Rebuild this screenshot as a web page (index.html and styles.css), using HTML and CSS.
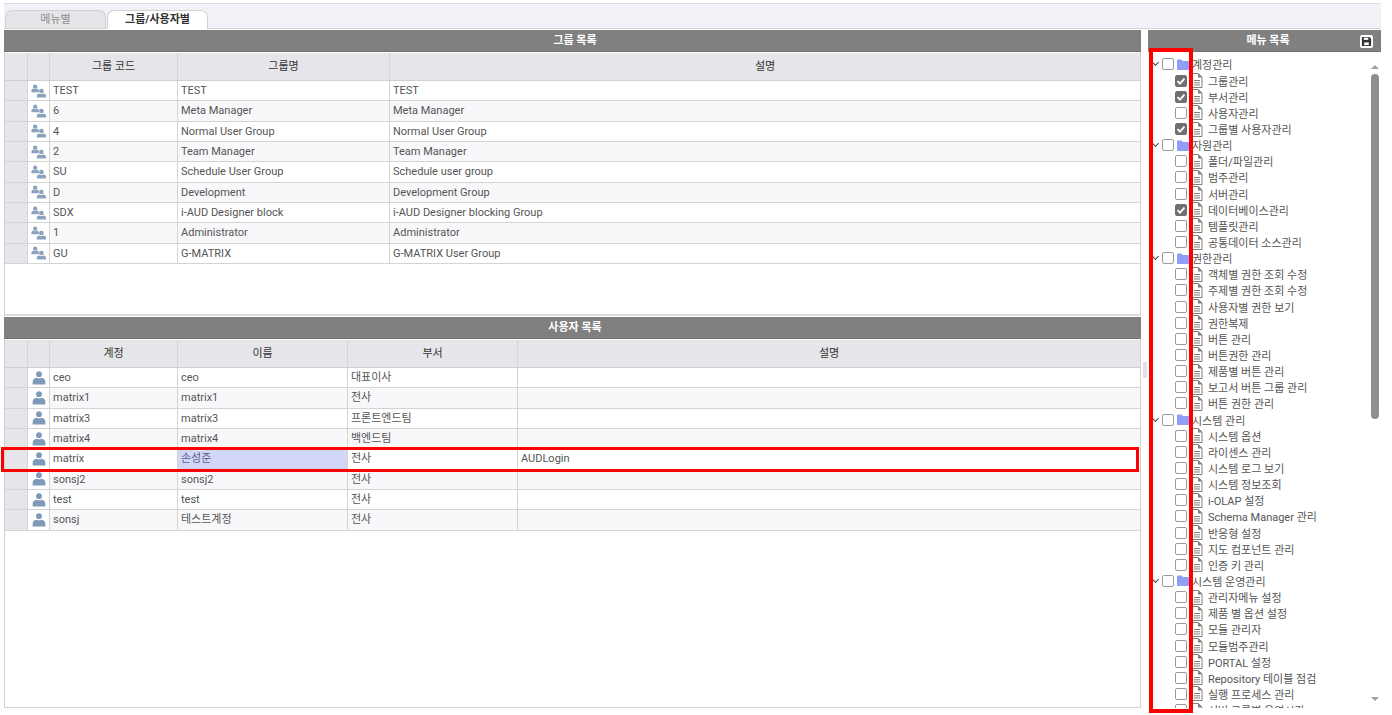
FILE: index.html
```html
<!DOCTYPE html>
<html lang="en">
<head>
  <meta charset="UTF-8" />
  <title>권한 관리</title>
  <link rel="stylesheet" href="styles.css">
</head>
<body>
  <svg class="defs" width="0" height="0">
    <symbol id="i-user" viewBox="0 0 16 16">
      <circle cx="8" cy="3.600" r="3.300" />
      <path d="M.8 15.500v-3.800C.8 9 3.500 7.600 5.300 7.600 6.300 8.500 9.700 8.500 10.700 7.600 12.500 7.600 15.200 9 15.200 11.700v3.800z" />
    </symbol>
    <symbol id="i-group" viewBox="0 0 18 16">
      <circle cx="5" cy="2.800" r="2.600" />
      <path d="M.5 9.500V7.800C.5 6 2 5.400 3 5.400 4 6.100 6 6.100 7 5.400 8 5.400 9.500 6 9.500 7.500V9.500z" />
      <circle cx="12.500" cy="8" r="2.800" />
      <path d="M7 15.800V13.800C7 11.800 8.800 10.900 10.200 10.900 11.300 11.700 13.700 11.700 14.800 10.900 16.200 10.900 18 11.800 18 13.800V15.800z" />
    </symbol>
    <symbol id="i-doc" viewBox="0 0 12 15">
      <path class="doc-line" d="M1 .5h6.500L11 4v10.500H1z" />
      <path class="doc-fold" d="M7 .5V4.500h4z" />
      <path class="doc-line" d="M3 7.500h6M3 9.800h6M3 12h6" />
    </symbol>
    <symbol id="i-folder" viewBox="0 0 12 11">
      <path d="M0 1.500C0 .8.500.500 1 .500h3.500L6 2h5c.600 0 1 .400 1 1v7c0 .600-.400 1-1 1H1c-.500 0-1-.400-1-1z" />
    </symbol>
    <symbol id="i-check" viewBox="0 0 12 12">
      <path d="M2.500 6.200l2.500 2.500 4.500-5" />
    </symbol>
  </svg>

  <div class="page">
    <div class="tab-strip">
      <div class="tab">메뉴별</div>
      <div class="tab active">그룹/사용자별</div>
    </div>

    <div class="workspace">
      <div class="left-col">
        <section class="panel group-panel">
          <div class="panel-title">그룹 목록</div>
          <div class="row head cols-group">
            <div></div><div></div><div>그룹 코드</div><div>그룹명</div><div>설명</div>
          </div>
          <div class="row cols-group"><div class="num"></div><div class="ico"><svg class="group-ico"><use href="#i-group"/></svg></div><div>TEST</div><div>TEST</div><div>TEST</div></div>
          <div class="row cols-group"><div class="num"></div><div class="ico"><svg class="group-ico"><use href="#i-group"/></svg></div><div>6</div><div>Meta Manager</div><div>Meta Manager</div></div>
          <div class="row cols-group"><div class="num"></div><div class="ico"><svg class="group-ico"><use href="#i-group"/></svg></div><div>4</div><div>Normal User Group</div><div>Normal User Group</div></div>
          <div class="row cols-group"><div class="num"></div><div class="ico"><svg class="group-ico"><use href="#i-group"/></svg></div><div>2</div><div>Team Manager</div><div>Team Manager</div></div>
          <div class="row cols-group"><div class="num"></div><div class="ico"><svg class="group-ico"><use href="#i-group"/></svg></div><div>SU</div><div>Schedule User Group</div><div>Schedule user group</div></div>
          <div class="row cols-group"><div class="num"></div><div class="ico"><svg class="group-ico"><use href="#i-group"/></svg></div><div>D</div><div>Development</div><div>Development Group</div></div>
          <div class="row cols-group"><div class="num"></div><div class="ico"><svg class="group-ico"><use href="#i-group"/></svg></div><div>SDX</div><div>i-AUD Designer block</div><div>i-AUD Designer blocking Group</div></div>
          <div class="row cols-group"><div class="num"></div><div class="ico"><svg class="group-ico"><use href="#i-group"/></svg></div><div>1</div><div>Administrator</div><div>Administrator</div></div>
          <div class="row cols-group"><div class="num"></div><div class="ico"><svg class="group-ico"><use href="#i-group"/></svg></div><div>GU</div><div>G-MATRIX</div><div>G-MATRIX User Group</div></div>
        </section>

        <section class="panel user-panel">
          <div class="panel-title">사용자 목록</div>
          <div class="row head cols-user">
            <div></div><div></div><div>계정</div><div>이름</div><div>부서</div><div>설명</div>
          </div>
          <div class="row cols-user"><div class="num"></div><div class="ico"><svg class="user-ico"><use href="#i-user"/></svg></div><div>ceo</div><div>ceo</div><div>대표이사</div><div></div></div>
          <div class="row cols-user"><div class="num"></div><div class="ico"><svg class="user-ico"><use href="#i-user"/></svg></div><div>matrix1</div><div>matrix1</div><div>전사</div><div></div></div>
          <div class="row cols-user"><div class="num"></div><div class="ico"><svg class="user-ico"><use href="#i-user"/></svg></div><div>matrix3</div><div>matrix3</div><div>프론트엔드팀</div><div></div></div>
          <div class="row cols-user"><div class="num"></div><div class="ico"><svg class="user-ico"><use href="#i-user"/></svg></div><div>matrix4</div><div>matrix4</div><div>백엔드팀</div><div></div></div>
          <div class="row cols-user"><div class="num"></div><div class="ico"><svg class="user-ico"><use href="#i-user"/></svg></div><div>matrix</div><div class="picked">손성준</div><div>전사</div><div>AUDLogin</div></div>
          <div class="row cols-user"><div class="num"></div><div class="ico"><svg class="user-ico"><use href="#i-user"/></svg></div><div>sonsj2</div><div>sonsj2</div><div>전사</div><div></div></div>
          <div class="row cols-user"><div class="num"></div><div class="ico"><svg class="user-ico"><use href="#i-user"/></svg></div><div>test</div><div>test</div><div>전사</div><div></div></div>
          <div class="row cols-user"><div class="num"></div><div class="ico"><svg class="user-ico"><use href="#i-user"/></svg></div><div>sonsj</div><div>테스트계정</div><div>전사</div><div></div></div>
        </section>
      </div>

      <div class="splitter"><span class="grip"></span></div>

      <aside class="menu-panel">
        <div class="panel-title menu-title">메뉴 목록
          <button class="save-btn" type="button">
            <svg viewBox="0 0 12 12" width="11" height="11"><path d="M1 1h8l2 2v8H1z" fill="#333"/><rect x="3" y="1.800" width="5" height="2.400" fill="#fff"/><rect x="3.500" y="7" width="5" height="3" fill="#fff"/></svg>
          </button>
        </div>
        <div class="tree">
          <div class="tree-list">
            <div class="node folder"><span class="chev"></span><span class="cb"></span><svg class="folder-ico"><use href="#i-folder"/></svg><span>계정관리</span></div>
            <div class="node"><span class="cb on"><svg><use href="#i-check"/></svg></span><svg class="doc-ico"><use href="#i-doc"/></svg><span>그룹관리</span></div>
            <div class="node"><span class="cb on"><svg><use href="#i-check"/></svg></span><svg class="doc-ico"><use href="#i-doc"/></svg><span>부서관리</span></div>
            <div class="node"><span class="cb"></span><svg class="doc-ico"><use href="#i-doc"/></svg><span>사용자관리</span></div>
            <div class="node"><span class="cb on"><svg><use href="#i-check"/></svg></span><svg class="doc-ico"><use href="#i-doc"/></svg><span>그룹별 사용자관리</span></div>
            <div class="node folder"><span class="chev"></span><span class="cb"></span><svg class="folder-ico"><use href="#i-folder"/></svg><span>자원관리</span></div>
            <div class="node"><span class="cb"></span><svg class="doc-ico"><use href="#i-doc"/></svg><span>폴더/파일관리</span></div>
            <div class="node"><span class="cb"></span><svg class="doc-ico"><use href="#i-doc"/></svg><span>범주관리</span></div>
            <div class="node"><span class="cb"></span><svg class="doc-ico"><use href="#i-doc"/></svg><span>서버관리</span></div>
            <div class="node"><span class="cb on"><svg><use href="#i-check"/></svg></span><svg class="doc-ico"><use href="#i-doc"/></svg><span>데이터베이스관리</span></div>
            <div class="node"><span class="cb"></span><svg class="doc-ico"><use href="#i-doc"/></svg><span>템플릿관리</span></div>
            <div class="node"><span class="cb"></span><svg class="doc-ico"><use href="#i-doc"/></svg><span>공통데이터 소스관리</span></div>
            <div class="node folder"><span class="chev"></span><span class="cb"></span><svg class="folder-ico"><use href="#i-folder"/></svg><span>권한관리</span></div>
            <div class="node"><span class="cb"></span><svg class="doc-ico"><use href="#i-doc"/></svg><span>객체별 권한 조회 수정</span></div>
            <div class="node"><span class="cb"></span><svg class="doc-ico"><use href="#i-doc"/></svg><span>주제별 권한 조회 수정</span></div>
            <div class="node"><span class="cb"></span><svg class="doc-ico"><use href="#i-doc"/></svg><span>사용자별 권한 보기</span></div>
            <div class="node"><span class="cb"></span><svg class="doc-ico"><use href="#i-doc"/></svg><span>권한복제</span></div>
            <div class="node"><span class="cb"></span><svg class="doc-ico"><use href="#i-doc"/></svg><span>버튼 관리</span></div>
            <div class="node"><span class="cb"></span><svg class="doc-ico"><use href="#i-doc"/></svg><span>버튼권한 관리</span></div>
            <div class="node"><span class="cb"></span><svg class="doc-ico"><use href="#i-doc"/></svg><span>제품별 버튼 관리</span></div>
            <div class="node"><span class="cb"></span><svg class="doc-ico"><use href="#i-doc"/></svg><span>보고서 버튼 그룹 관리</span></div>
            <div class="node"><span class="cb"></span><svg class="doc-ico"><use href="#i-doc"/></svg><span>버튼 권한 관리</span></div>
            <div class="node folder"><span class="chev"></span><span class="cb"></span><svg class="folder-ico"><use href="#i-folder"/></svg><span>시스템 관리</span></div>
            <div class="node"><span class="cb"></span><svg class="doc-ico"><use href="#i-doc"/></svg><span>시스템 옵션</span></div>
            <div class="node"><span class="cb"></span><svg class="doc-ico"><use href="#i-doc"/></svg><span>라이센스 관리</span></div>
            <div class="node"><span class="cb"></span><svg class="doc-ico"><use href="#i-doc"/></svg><span>시스템 로그 보기</span></div>
            <div class="node"><span class="cb"></span><svg class="doc-ico"><use href="#i-doc"/></svg><span>시스템 정보조회</span></div>
            <div class="node"><span class="cb"></span><svg class="doc-ico"><use href="#i-doc"/></svg><span>i-OLAP 설정</span></div>
            <div class="node"><span class="cb"></span><svg class="doc-ico"><use href="#i-doc"/></svg><span>Schema Manager 관리</span></div>
            <div class="node"><span class="cb"></span><svg class="doc-ico"><use href="#i-doc"/></svg><span>반응형 설정</span></div>
            <div class="node"><span class="cb"></span><svg class="doc-ico"><use href="#i-doc"/></svg><span>지도 컴포넌트 관리</span></div>
            <div class="node"><span class="cb"></span><svg class="doc-ico"><use href="#i-doc"/></svg><span>인증 키 관리</span></div>
            <div class="node folder"><span class="chev"></span><span class="cb"></span><svg class="folder-ico"><use href="#i-folder"/></svg><span>시스템 운영관리</span></div>
            <div class="node"><span class="cb"></span><svg class="doc-ico"><use href="#i-doc"/></svg><span>관리자메뉴 설정</span></div>
            <div class="node"><span class="cb"></span><svg class="doc-ico"><use href="#i-doc"/></svg><span>제품 별 옵션 설정</span></div>
            <div class="node"><span class="cb"></span><svg class="doc-ico"><use href="#i-doc"/></svg><span>모듈 관리자</span></div>
            <div class="node"><span class="cb"></span><svg class="doc-ico"><use href="#i-doc"/></svg><span>모듈범주관리</span></div>
            <div class="node"><span class="cb"></span><svg class="doc-ico"><use href="#i-doc"/></svg><span>PORTAL 설정</span></div>
            <div class="node"><span class="cb"></span><svg class="doc-ico"><use href="#i-doc"/></svg><span>Repository 테이블 점검</span></div>
            <div class="node"><span class="cb"></span><svg class="doc-ico"><use href="#i-doc"/></svg><span>실행 프로세스 관리</span></div>
            <div class="node"><span class="cb"></span><svg class="doc-ico"><use href="#i-doc"/></svg><span>서버 그룹별 운영시간</span></div>
          </div>
          <div class="scrollbar">
            <span class="arrow up"></span>
            <span class="thumb"></span>
            <span class="arrow down"></span>
          </div>
        </div>
      </aside>
    </div>
  </div>

  <!-- red highlight boxes over the grid and the tree -->
  <div class="mark mark-row"></div>
  <div class="mark mark-tree"></div>
</body>
</html>
```

FILE: styles.css
```css
html, body {
  margin: 0;
  height: 100%;
  overflow: hidden;
  background: #fff;
}

body {
  font-family: Roboto, "Noto Sans CJK KR", sans-serif;
  font-size: 11px;
  color: #555;
}

.defs {
  position: absolute;
}

.page {
  width: 1377px;
  margin-left: 4px;
  padding-top: 3px;
}

/* === TABS === */
.tab-strip {
  display: flex;
  align-items: flex-end;
  gap: 1px;
  height: 24px;
  padding-left: 1px;
  background: #f1f1f7;
  border-top: 1px solid #dcdcdc;
  border-bottom: 1px solid #d2d2d2;
}

.tab {
  width: 101px;
  height: 18px;
  line-height: 18px;
  text-align: center;
  color: #8c8c8c;
  background: #e6e6ea;
  border: 1px solid #d2d2d2;
  border-bottom: 0;
  border-radius: 7px 7px 0 0;
  box-sizing: border-box;
}

.tab.active {
  height: 19px;
  margin-bottom: -1px;
  background: #fff;
  color: #333;
  font-weight: 700;
}

/* === LAYOUT === */
.workspace {
  display: flex;
  height: 678px;
  margin-top: 1px;
}

.left-col {
  width: 1137px;
  display: flex;
  flex-direction: column;
}

.panel {
  box-sizing: border-box;
  border-left: 1px solid #d0d0d0;
  border-right: 1px solid #d0d0d0;
  border-bottom: 1px solid #d0d0d0;
}

.group-panel {
  height: 286px;
  border-bottom-width: 2px;
  border-bottom-color: #dcdcdc;
}

.user-panel {
  flex: 1;
  margin-top: 1px;
}

.panel-title {
  height: 22px;
  line-height: 21px;
  margin: 0 -1px 1px;
  padding-left: 5px;
  box-sizing: border-box;
  text-align: center;
  font-weight: 700;
  color: #fff;
  background: #808080;
  border-bottom: 1px solid #707070;
}

.splitter {
  width: 7px;
  flex: none;
  padding-top: 332px;
  box-sizing: border-box;
}

.grip {
  display: block;
  width: 4px;
  height: 16px;
  margin: 0 auto;
  background: #e2e2e6;
}

/* === GRID ROWS === */
.row {
  display: grid;
  height: 20.330px;
  box-sizing: border-box;
  border-bottom: 1px solid #d4d4d4;
  line-height: 20px;
}

.row:nth-child(even) {
  background: #f8f8fb;
}

.row > div {
  padding-left: 3px;
  border-right: 1px solid #d4d4d4;
  overflow: hidden;
  white-space: nowrap;
}

.row > div:last-child {
  border-right: 0;
}

.cols-group {
  grid-template-columns: 23px 22px 128px 212px 1fr;
}

.cols-user {
  grid-template-columns: 23px 22px 128px 170px 170px 1fr;
}

.row.head {
  height: 28px;
  line-height: 27px;
  background: #e6e6ea;
  border-bottom-color: #d0d0d0;
  color: #333;
}

.row.head > div {
  padding-left: 0;
  text-align: center;
}

.row > .num {
  background: #e6e6ea;
  padding: 0;
}

.row > .ico {
  display: flex;
  align-items: center;
  justify-content: center;
  padding: 0;
  background: #fff;
}

.row > .picked {
  background: #d3d7f7;
  color: #5a5f8a;
}

.group-ico {
  width: 15px;
  height: 14px;
  fill: #8ba2bd;
}

.user-ico {
  width: 14px;
  height: 14px;
  fill: #7f9ab8;
}

/* === MENU TREE === */
.menu-panel {
  width: 233px;
  flex: none;
}

.menu-title {
  position: relative;
  margin: 0 0 1px;
  padding-left: 7px;
}

.save-btn {
  position: absolute;
  right: 8px;
  top: 5px;
  width: 13px;
  height: 13px;
  padding: 1px;
  display: flex;
  border: 0;
  border-radius: 2px;
  background: #fff;
}

.tree {
  display: flex;
  height: 655px;
  overflow: hidden;
}

.tree-list {
  flex: 1;
  padding-top: 3.400px;
}

.node {
  display: flex;
  align-items: center;
  height: 16.150px;
  padding-left: 27px;
  white-space: nowrap;
}

.node.folder {
  padding-left: 5px;
}

.chev {
  width: 4px;
  height: 4px;
  margin: -3px 4px 0 0;
  border-right: 1.500px solid #444;
  border-bottom: 1.500px solid #444;
  transform: rotate(45deg);
}

.cb {
  flex: none;
  width: 12px;
  height: 12px;
  box-sizing: border-box;
  border: 1px solid #9a9a9a;
  border-radius: 2px;
  background: #fff;
  position: relative;
}

.cb.on {
  background: #707070;
  border-color: #707070;
}

.cb svg {
  position: absolute;
  left: -1px;
  top: -1px;
  width: 12px;
  height: 12px;
  fill: none;
  stroke: #fff;
  stroke-width: 1.800;
}

.folder-ico {
  flex: none;
  width: 12px;
  height: 11px;
  margin: 0 3px 0 3px;
  fill: #8f9ff8;
}

.doc-ico {
  flex: none;
  width: 12px;
  height: 15px;
  margin: 0 5px 0 4px;
  fill: #fff;
}

.doc-line {
  fill: none;
  stroke: #808080;
  stroke-width: 1;
}

.doc-fold {
  fill: #808080;
}

.scrollbar {
  width: 10px;
  flex: none;
  display: flex;
  flex-direction: column;
  align-items: center;
  margin-right: 1px;
  padding-top: 12px;
}

.arrow {
  width: 0;
  height: 0;
  border-left: 4px solid transparent;
  border-right: 4px solid transparent;
}

.arrow.up {
  border-bottom: 4px solid #a0a0a0;
}

.arrow.down {
  border-top: 4px solid #a0a0a0;
  margin-top: 278px;
}

.thumb {
  width: 8px;
  height: 345px;
  margin-top: 5px;
  border-radius: 4px;
  background: #8e8e8e;
}

/* === RED MARKS === */
.mark {
  position: absolute;
  box-sizing: border-box;
  pointer-events: none;
}

.mark-row {
  left: 1px;
  top: 447px;
  width: 1138px;
  height: 25px;
  border: 3px solid #f00;
}

.mark-tree {
  left: 1149px;
  top: 48px;
  width: 44px;
  height: 665px;
  border: 4px solid #f00;
}
```
